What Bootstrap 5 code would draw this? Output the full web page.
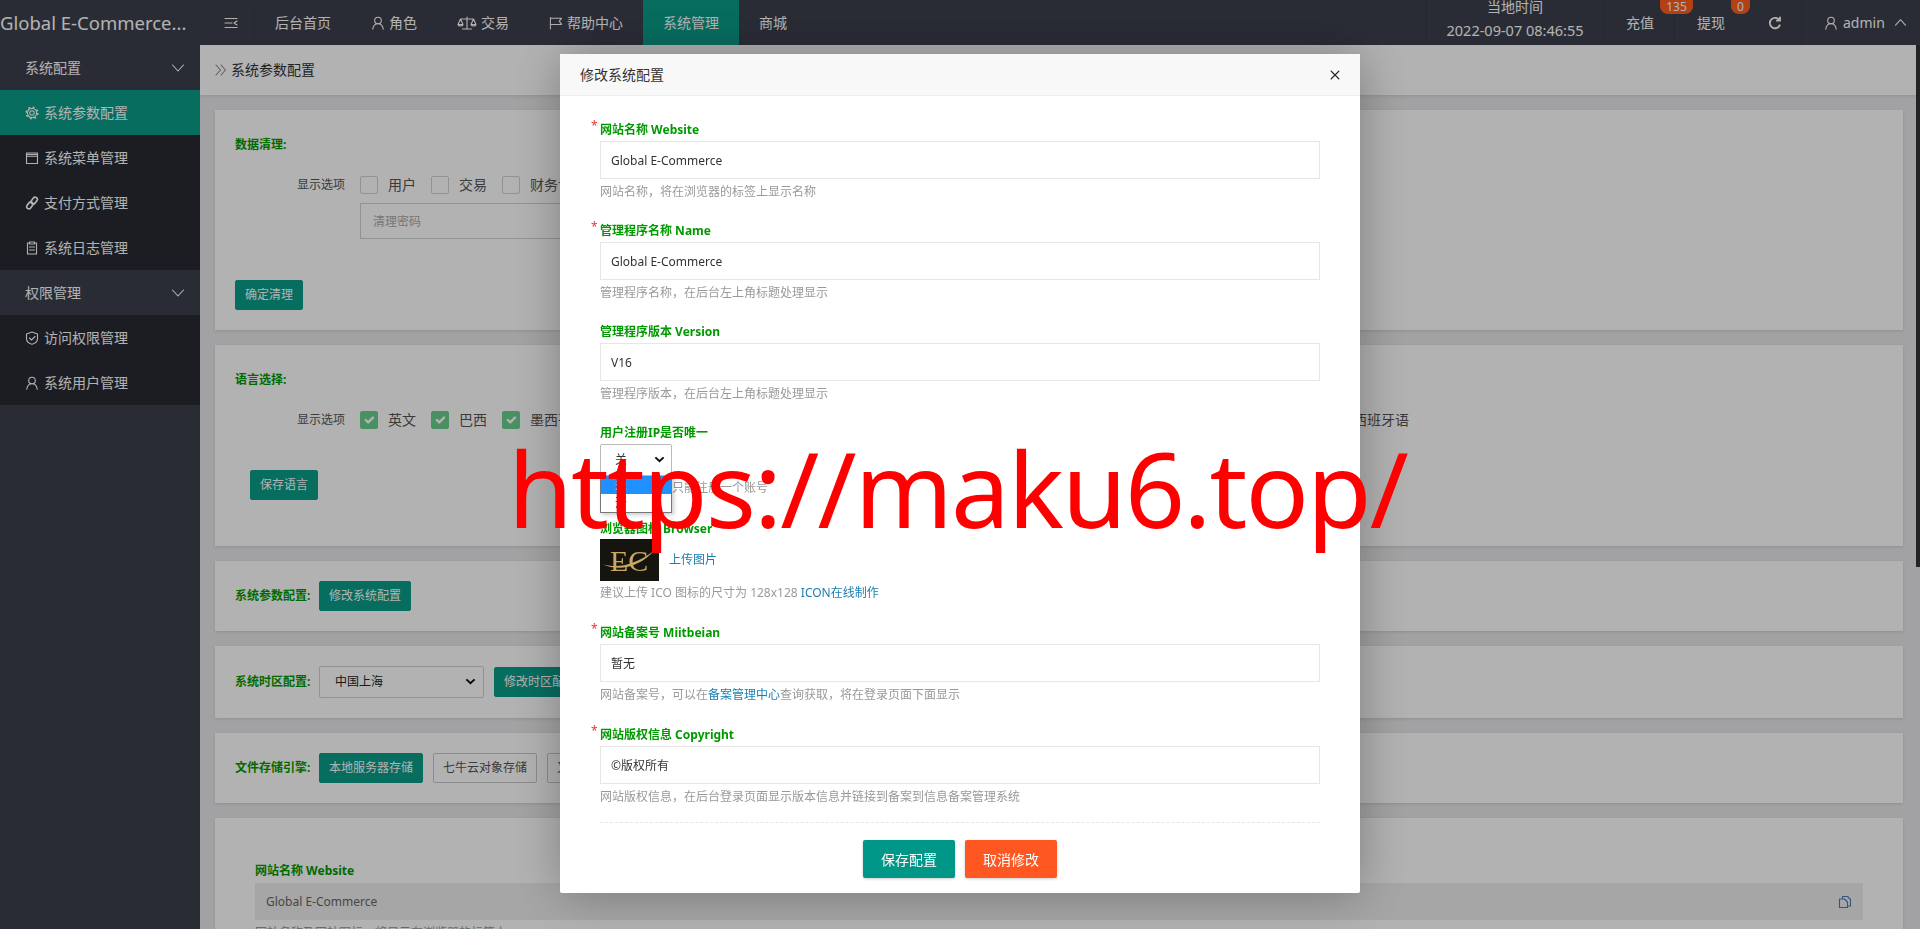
<!DOCTYPE html>
<html lang="zh-CN">
<head>
<meta charset="utf-8">
<title>系统参数配置</title>
<link href="https://cdn.jsdelivr.net/npm/bootstrap@5.3.0/dist/css/bootstrap.min.css" rel="stylesheet">
<style>
html,body{height:100%;overflow:hidden}
body{font-family:"Noto Sans","Noto Sans CJK SC",sans-serif;font-size:12px;background:#e9e9eb;color:#555;line-height:18px}
.ico{width:14px;height:14px;fill:none;stroke:currentColor;stroke-width:1.1;stroke-linecap:round;stroke-linejoin:round;flex:none}
.ico-w{width:20px}
.topbar{height:45px;background:#3c404d;color:#fff;font-size:14px;overflow:hidden}
.brand{width:200px;font-size:18.500px;line-height:40px;white-space:nowrap;overflow:hidden;flex:none}
.tog{width:55px;border-right:1px solid #343844;height:32px;flex:none}
.tnav{padding:0 20px;height:45px;color:#fff;gap:4px;flex:none}
.tnav-on{background:#0a9c88}
.time-cell{width:178px;height:40px;border-left:1px solid #343844;border-right:1px solid #343844;text-align:center;align-self:flex-start;flex:none}
.when{height:14px;line-height:14px}
.stamp{font-size:14.500px;height:22px;line-height:22px;margin-top:5px}
.fund{height:45px;padding-left:22px;position:relative;flex:none}
.fund-a{width:71px;border-right:1px solid #343844}
.fund-b{width:74px}
.pill{position:absolute;top:0;background:#ff5f20;color:#fff;font-size:12px;line-height:14px;height:14px;border-radius:0 0 8px 8px;text-align:center}
.pill-a{left:56px;width:33px}
.pill-b{left:56px;width:19px}
.redo{width:53px;height:45px;border-right:1px solid #343844;flex:none}
.who{width:118px;padding-left:22px;gap:5px;flex:none}
.who .chev{width:13px;height:13px;margin-left:4px}
.shell{height:884px}
.side{width:200px;background:#3c404d;color:#fff;font-size:14px;flex:none}
.side-head{height:45px;padding:0 15px 0 25px;background:#3c404d}
.side-link{height:45px;padding-left:25px;gap:5px;background:#272a32}
.side-on{background:#0a9c88}
.side .chev{width:14px;height:14px}
.work{overflow:hidden;min-width:0}
.crumb{height:50px;background:#fff;padding-left:15px;font-size:14px;color:#333;gap:4px;box-shadow:0 1px 4px rgba(0,0,0,.12)}
.crumb .ico{color:#888;width:12px}
.stack{padding:15px 13px 0 15px;gap:15px}
.sheet{background:#fff;border:0;border-radius:0;box-shadow:0 1px 3px rgba(0,0,0,.12);padding-left:20px;flex:none}
.sheet-a{height:220px;padding-top:25px}
.sheet-b{height:201px;padding-top:25px}
.sheet-c{height:70px}
.sheet-d{height:72px}
.sheet-e{height:130px;padding:44px 40px 0}
.cap{color:#090;font-weight:700;font-size:12px;line-height:20px;white-space:nowrap}
.cap-in{width:84px}
.opts{margin:21px 0 0 62px;height:18px;font-size:14px;white-space:nowrap;color:#555}
.opts-tag{font-size:12px;width:63px;flex:none}
.opt{margin-right:15px;gap:10px;flex:none}
.opts .form-check-input{width:18px;height:18px;margin:0;border-radius:2px;border-color:#d2d2d2;flex:none;box-shadow:none}
.opts .form-check-input:checked{background-color:#6bcf8f;border-color:#6bcf8f}
.wipe{width:560px;height:36px;margin:9px 0 0 125px;font-size:12px;border-radius:0;border-color:#d2d2d2}
.wipe::placeholder{color:#aaa}
.act{font-size:12px;height:30px;line-height:28px;padding:0 9px;border-radius:2px;background:#0a9c88;border:1px solid #0a9c88;color:#fff;white-space:nowrap;flex:none}
.act-ghost{background:#fff;border-color:#c9c9c9;color:#555}
.act-next{margin-left:10px}
.act-gap{margin-top:41px}
.act-lang{margin-left:15px}
.native{background-image:url("data:image/svg+xml,%3csvg xmlns='http://www.w3.org/2000/svg' viewBox='0 0 12 8'%3e%3cpath d='M1.500 1.500L6 6l4.500-4.500' fill='none' stroke='%23111' stroke-width='2.200'/%3e%3c/svg%3e")}
.tz{width:165px;height:32px;font-size:12px;padding:0 15px;border-radius:2px;border-color:#d2d2d2;flex:none;background-position:right 7px center;background-size:11px}
.ro{height:37px;background:#eee;border:0;padding:0 11px;color:#666;font-size:12px;margin-top:3px;border-radius:0}
.ro .ico{color:#4a7ab8}
.cap-f{font-weight:700;color:#090;font-size:12px}
.scroll{width:4px;flex:none}
.scroll i{display:block;height:522px;background:#333}
.modal-backdrop.show{opacity:.3}
.modal-dialog.cfg-dlg{max-width:800px;width:800px;margin:54px auto 0}
.cfg-dlg .modal-content{border:0;border-radius:2px;box-shadow:1px 1px 50px rgba(0,0,0,.3);color:#333}
.cfg-dlg .modal-header{height:42px;padding:0 19px 0 20px;background:#f8f8f8;border-bottom:1px solid #eee;font-size:14px;border-radius:0}
.cfg-dlg .btn-close{width:12px;height:12px;padding:0;margin:0;opacity:1;background:transparent url("data:image/svg+xml,%3csvg xmlns='http://www.w3.org/2000/svg' viewBox='0 0 12 12'%3e%3cpath d='M.5.5l11 11M11.500.5l-11 11' fill='none' stroke='%23222' stroke-width='1.100'/%3e%3c/svg%3e") center/12px no-repeat}
.cfg-dlg .modal-body{padding:24px 40px 0}
.fld{margin-bottom:20px}
.fld-wide{margin-bottom:21px}
.fld-end{margin-bottom:0}
.fld-lab{display:block;color:#090;font-weight:700;line-height:20px;margin-bottom:1px;position:relative}
.req::before{content:"*";position:absolute;left:-9px;top:-4px;color:#e33;font-weight:400;font-size:12px}
.fld .form-control{height:38px;border-radius:0;border-color:#e6e6e6;font-size:12px;padding:0 10px;color:#333;box-shadow:none}
.note{color:#999;margin-top:4px;line-height:18px;white-space:nowrap}
.note-fav{margin-top:3px}
.note a,.up{color:#1a7fb0;text-decoration:none}
.pick{position:relative;width:72px;height:32px}
.pick .form-select{height:32px;font-size:12px;padding:0 0 0 14px;border-radius:2px;border-color:#bbb;color:#333;background-position:right 6px center;background-size:11px}
.drop{position:absolute;left:0;top:32px;width:72px;border:1px solid #777;border-top:0;background:#fff;color:#333;z-index:2;box-shadow:2px 2px 4px rgba(0,0,0,.2)}
.drop div{height:18px;padding-left:14px;line-height:18px}
.drop .hit{background:#1e90ff;color:#fff}
.note-pick{margin:3px 0 22px 72px}
.fav-row{gap:10px;margin-top:-1px}
.fav{width:59px;height:42px;background:#16140f}
.fav svg{display:block;width:59px;height:42px}
.fav text{font-family:"Liberation Serif",serif;font-size:30px;fill:#c9a663}
.line{border:0;border-top:1px dashed #e6e6e6;opacity:1;margin:16px 0 17px}
.foot{padding-bottom:15px;gap:10px}
.foot .big{width:92px;height:38px;border-radius:2px;font-size:14px;color:#fff;border:0;padding:0;box-shadow:0 1px 3px rgba(0,0,0,.2)}
.big-ok{background:#009688}
.big-no{background:#ff5722}
.mark-url{position:absolute;left:508px;top:413px;z-index:1060;color:#f00;font-family:"Noto Sans",sans-serif;font-size:105px;letter-spacing:-1.900px;line-height:150px;white-space:nowrap;pointer-events:none}
</style>
</head>
<body>
<svg width="0" height="0" class="position-absolute">
<symbol id="i-tog" viewBox="0 0 14 14"><path d="M1 2.500h12M1 7h7M1 11.500h12M13 5l-3 2 3 2"/></symbol>
<symbol id="i-user" viewBox="0 0 14 14"><circle cx="7" cy="4.500" r="3.300"/><path d="M1.800 13.200C2.200 10 4.200 7.800 7 7.800s4.800 2.200 5.200 5.400"/></symbol>
<symbol id="i-scale" viewBox="0 0 20 14"><path d="M10 1v11.500M5.500 13h9M3.500 3h13M3.500 3L1 8.500h5zM16.500 3L14 8.500h5zM1 8.500c.5 2 4.500 2 5 0M14 8.500c.5 2 4.500 2 5 0"/></symbol>
<symbol id="i-flag" viewBox="0 0 15 14"><path d="M1.500 1v12.500M1.500 2h12l-2.500 3 2.500 3.500h-12"/></symbol>
<symbol id="i-gear" viewBox="0 0 14 14"><circle cx="7" cy="7" r="2.200"/><circle cx="7" cy="7" r="4.600"/><circle cx="7" cy="7" r="5.800" stroke-width="1.500" stroke-dasharray="2 2.550" stroke-linecap="butt"/></symbol>
<symbol id="i-cal" viewBox="0 0 14 14"><rect x="1.500" y="2" width="11" height="10.500"/><path d="M1.500 5.200h11M1.500 3.500h11"/></symbol>
<symbol id="i-link" viewBox="0 0 14 14"><g stroke-width="1.700"><rect x="7" y=".9" width="4.400" height="7.400" rx="2.200" transform="rotate(38 9.200 4.600)"/><rect x="2.600" y="5.700" width="4.400" height="7.400" rx="2.200" transform="rotate(38 4.800 9.400)"/></g></symbol>
<symbol id="i-clip" viewBox="0 0 14 14"><path d="M4 2H2.500v11h9V2H10M4.500 1h5v2h-5zM4.500 6h5M4.500 9h5"/></symbol>
<symbol id="i-shield" viewBox="0 0 14 14"><path d="M7 1l5.500 2v4.500c0 3-2.500 5-5.500 5.800-3-.8-5.500-2.800-5.500-5.800V3zM4.500 7l2 2 3.500-3.500"/></symbol>
<symbol id="i-down" viewBox="0 0 14 14"><path d="M1.500 4l5.500 6 5.500-6"/></symbol>
<symbol id="i-up" viewBox="0 0 14 14"><path d="M1.500 10l5.500-6 5.500 6"/></symbol>
<symbol id="i-redo" viewBox="0 0 14 14"><g stroke-width="1.800"><path d="M11.800 9.200A5.200 5.200 0 1 1 11.600 4.500M12 1.500v3.200H8.800"/></g></symbol>
<symbol id="i-dbl" viewBox="0 0 12 14"><path d="M1 2l4.500 5L1 12M6 2l4.500 5L6 12"/></symbol>
<symbol id="i-copy" viewBox="0 0 14 14"><path d="M4.500 4V1.500h5l3 3v6.500H9.500M1.500 4h5l3 3v5.500h-8z"/></symbol>
</svg>

<header class="topbar d-flex align-items-center">
  <div class="brand">Global E-Commerce...</div>
  <div class="tog d-flex align-items-center"><svg class="ico ms-4"><use href="#i-tog"/></svg></div>
  <div class="tnav d-flex align-items-center">后台首页</div>
  <div class="tnav d-flex align-items-center"><svg class="ico"><use href="#i-user"/></svg>角色</div>
  <div class="tnav d-flex align-items-center"><svg class="ico ico-w"><use href="#i-scale"/></svg>交易</div>
  <div class="tnav d-flex align-items-center"><svg class="ico"><use href="#i-flag"/></svg>帮助中心</div>
  <div class="tnav tnav-on d-flex align-items-center">系统管理</div>
  <div class="tnav d-flex align-items-center">商城</div>
  <div class="time-cell ms-auto"><div class="when">当地时间</div><div class="stamp">2022-09-07 08:46:55</div></div>
  <div class="fund fund-a d-flex align-items-center">充值<span class="pill pill-a">135</span></div>
  <div class="fund fund-b d-flex align-items-center">提现<span class="pill pill-b">0</span></div>
  <div class="redo d-flex align-items-center justify-content-center"><svg class="ico"><use href="#i-redo"/></svg></div>
  <div class="who d-flex align-items-center"><svg class="ico"><use href="#i-user"/></svg>admin<svg class="ico chev"><use href="#i-up"/></svg></div>
</header>

<div class="shell d-flex">
  <aside class="side">
    <div class="side-head d-flex align-items-center justify-content-between">系统配置<svg class="ico chev"><use href="#i-down"/></svg></div>
    <div class="side-link side-on d-flex align-items-center"><svg class="ico"><use href="#i-gear"/></svg>系统参数配置</div>
    <div class="side-link d-flex align-items-center"><svg class="ico"><use href="#i-cal"/></svg>系统菜单管理</div>
    <div class="side-link d-flex align-items-center"><svg class="ico"><use href="#i-link"/></svg>支付方式管理</div>
    <div class="side-link d-flex align-items-center"><svg class="ico"><use href="#i-clip"/></svg>系统日志管理</div>
    <div class="side-head d-flex align-items-center justify-content-between">权限管理<svg class="ico chev"><use href="#i-down"/></svg></div>
    <div class="side-link d-flex align-items-center"><svg class="ico"><use href="#i-shield"/></svg>访问权限管理</div>
    <div class="side-link d-flex align-items-center"><svg class="ico"><use href="#i-user"/></svg>系统用户管理</div>
  </aside>
  <main class="work flex-fill">
    <div class="crumb d-flex align-items-center"><svg class="ico"><use href="#i-dbl"/></svg>系统参数配置</div>
    <div class="stack d-flex flex-column">
      <section class="card sheet sheet-a d-block">
        <div class="cap">数据清理:</div>
        <div class="opts d-flex align-items-center">
          <span class="opts-tag">显示选项</span>
          <label class="opt d-flex align-items-center"><input class="form-check-input" type="checkbox">用户</label>
          <label class="opt d-flex align-items-center"><input class="form-check-input" type="checkbox">交易</label>
          <label class="opt d-flex align-items-center"><input class="form-check-input" type="checkbox">财务记录</label>
        </div>
        <input class="form-control wipe" placeholder="清理密码">
        <button class="btn act act-gap" type="button">确定清理</button>
      </section>
      <section class="card sheet sheet-b d-block">
        <div class="cap">语言选择:</div>
        <div class="opts d-flex align-items-center">
          <span class="opts-tag">显示选项</span>
          <label class="opt d-flex align-items-center"><input class="form-check-input" type="checkbox" checked>英文</label>
          <label class="opt d-flex align-items-center"><input class="form-check-input" type="checkbox" checked>巴西</label>
          <label class="opt d-flex align-items-center"><input class="form-check-input" type="checkbox" checked>墨西哥</label>
          <label class="opt d-flex align-items-center"><input class="form-check-input" type="checkbox" checked>法国</label>
          <label class="opt d-flex align-items-center"><input class="form-check-input" type="checkbox" checked>德国</label>
          <label class="opt d-flex align-items-center"><input class="form-check-input" type="checkbox" checked>日本</label>
          <label class="opt d-flex align-items-center"><input class="form-check-input" type="checkbox" checked>韩国</label>
          <label class="opt d-flex align-items-center"><input class="form-check-input" type="checkbox" checked>泰国</label>
          <label class="opt d-flex align-items-center"><input class="form-check-input" type="checkbox" checked>越南</label>
          <label class="opt d-flex align-items-center"><input class="form-check-input" type="checkbox" checked>印度</label>
          <label class="opt d-flex align-items-center"><input class="form-check-input" type="checkbox" checked>俄语</label>
          <label class="opt d-flex align-items-center"><input class="form-check-input" type="checkbox" checked>意大利</label>
          <label class="opt d-flex align-items-center"><input class="form-check-input" type="checkbox" checked>阿拉伯</label>
          <label class="opt d-flex align-items-center"><input class="form-check-input" type="checkbox" checked>西班牙语</label>
        </div>
        <button class="btn act act-gap act-lang" type="button">保存语言</button>
      </section>
      <section class="card sheet sheet-c d-flex flex-row align-items-center">
        <div class="cap cap-in">系统参数配置:</div>
        <button class="btn act" type="button">修改系统配置</button>
      </section>
      <section class="card sheet sheet-d d-flex flex-row align-items-center">
        <div class="cap cap-in">系统时区配置:</div>
        <select class="form-select tz native"><option>中国上海</option></select>
        <button class="btn act act-next" type="button">修改时区配置</button>
      </section>
      <section class="card sheet sheet-c d-flex flex-row align-items-center">
        <div class="cap cap-in">文件存储引擎:</div>
        <button class="btn act" type="button">本地服务器存储</button>
        <button class="btn act act-ghost act-next" type="button">七牛云对象存储</button>
        <button class="btn act act-ghost act-next" type="button">又拍云存储</button>
      </section>
      <section class="card sheet sheet-e d-block">
        <div class="cap-f">网站名称 Website</div>
        <div class="ro d-flex align-items-center justify-content-between">Global E-Commerce<svg class="ico"><use href="#i-copy"/></svg></div>
        <div class="note">网站名称及网站图标，将显示在浏览器的标签上</div>
      </section>
    </div>
  </main>
  <div class="scroll"><i></i></div>
</div>

<div class="modal-backdrop show"></div>
<div class="modal d-block">
  <div class="modal-dialog cfg-dlg">
    <div class="modal-content">
      <div class="modal-header d-flex align-items-center justify-content-between">
        <span>修改系统配置</span>
        <button type="button" class="btn-close" aria-label="Close"></button>
      </div>
      <div class="modal-body">
        <div class="fld">
          <label class="fld-lab req">网站名称 Website</label>
          <input class="form-control" value="Global E-Commerce">
          <div class="note">网站名称，将在浏览器的标签上显示名称</div>
        </div>
        <div class="fld">
          <label class="fld-lab req">管理程序名称 Name</label>
          <input class="form-control" value="Global E-Commerce">
          <div class="note">管理程序名称，在后台左上角标题处理显示</div>
        </div>
        <div class="fld">
          <label class="fld-lab">管理程序版本 Version</label>
          <input class="form-control" value="V16">
          <div class="note">管理程序版本，在后台左上角标题处理显示</div>
        </div>
        <div>
          <label class="fld-lab">用户注册IP是否唯一</label>
          <div class="pick">
            <select class="form-select native"><option>关</option></select>
            <div class="drop"><div class="hit">关</div><div>开</div></div>
          </div>
          <div class="note note-pick">只能注册一个账号</div>
        </div>
        <div class="fld fld-wide">
          <label class="fld-lab">浏览器图标 Browser</label>
          <div class="fav-row d-flex align-items-center">
            <div class="fav"><svg viewBox="0 0 59 42"><text x="10" y="32">EC</text><path d="M2 25c16 5 32 1 52-13-13 14-32 22-52 13z" fill="#c9a663"/></svg></div>
            <a class="up" href="#">上传图片</a>
          </div>
          <div class="note note-fav">建议上传 ICO 图标的尺寸为 128x128 <a href="#">ICON在线制作</a></div>
        </div>
        <div class="fld fld-wide">
          <label class="fld-lab req">网站备案号 Miitbeian</label>
          <input class="form-control" value="暂无">
          <div class="note">网站备案号，可以在<a href="#">备案管理中心</a>查询获取，将在登录页面下面显示</div>
        </div>
        <div class="fld fld-end">
          <label class="fld-lab req">网站版权信息 Copyright</label>
          <input class="form-control" value="©版权所有">
          <div class="note">网站版权信息，在后台登录页面显示版本信息并链接到备案到信息备案管理系统</div>
        </div>
        <hr class="line">
        <div class="foot d-flex justify-content-center">
          <button class="btn big big-ok" type="button">保存配置</button>
          <button class="btn big big-no" type="button">取消修改</button>
        </div>
      </div>
    </div>
  </div>
</div>
<div class="mark-url">https://maku6.top/</div>
<script src="https://cdn.jsdelivr.net/npm/bootstrap@5.3.0/dist/js/bootstrap.bundle.min.js"></script>
</body>
</html>
